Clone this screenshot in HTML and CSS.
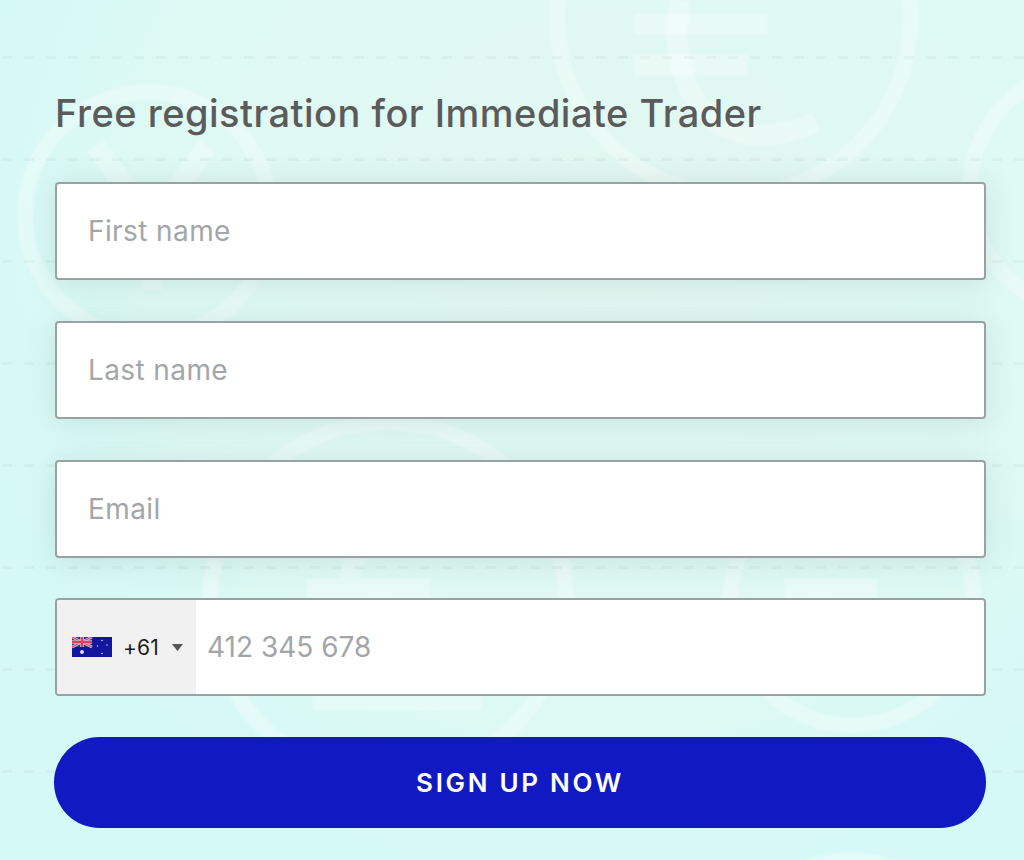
FILE: index.html
```html
<!DOCTYPE html>
<html lang="en">
<head>
<meta charset="utf-8">
<title>Free registration for Immediate Trader</title>
<link rel="stylesheet" href="styles.css">
</head>
<body>
<svg class="backdrop" viewBox="0 0 1024 860" aria-hidden="true">
  <defs>
    <pattern id="dashes" x="2" y="56" width="22" height="102" patternUnits="userSpaceOnUse">
      <rect width="10" height="3" fill="#9fb5b3" opacity=".13"/>
    </pattern>
    <radialGradient id="glow" cx="600" cy="250" r="660" gradientUnits="userSpaceOnUse">
      <stop offset="0" stop-color="#e2f8f1"/>
      <stop offset=".65" stop-color="#dff9f3"/>
      <stop offset="1" stop-color="#d4f9f7"/>
    </radialGradient>
  </defs>
  <rect width="1024" height="860" fill="url(#glow)"/>
  <g class="coins">
    <circle cx="734" cy="18" r="177"/>
    <path class="sign" d="M634 24H768M634 65H748"/>
    <path class="sign" d="M680 0C666 80 705 135 760 135C780 135 798 131 816 122"/>
    <circle cx="148" cy="215" r="123"/>
    <path class="sign" d="M95 146L152 222L208 146M152 222V290"/>
    <circle cx="388" cy="600" r="178"/>
    <path class="sign" d="M307 589H430M312 700H482M345 700C362 660 352 620 350 590C348 560 358 545 380 540"/>
    <circle cx="852" cy="603" r="122"/>
    <path class="sign" d="M784 589H877M830 560C835 545 825 540 825 560"/>
    <circle cx="1092" cy="190" r="122"/>
    <circle cx="850" cy="985" r="125"/>
  </g>
  <rect width="1024" height="860" fill="url(#dashes)"/>
</svg>

<form class="signup">
  <h1 class="title">Free registration for Immediate Trader</h1>
  <input class="field" type="text" placeholder="First name">
  <input class="field" type="text" placeholder="Last name">
  <input class="field" type="email" placeholder="Email">
  <div class="field phone">
    <div class="dial">
      <svg class="flag" viewBox="0 0 40 20" aria-hidden="true">
        <rect width="40" height="20" fill="#12169c"/>
        <rect width="20" height="10" fill="#2b2d8f"/>
        <path d="M0 0L20 10M20 0L0 10" stroke="#cfcfd8" stroke-width="2.6"/>
        <path d="M0 0L20 10M20 0L0 10" stroke="#dc4a62" stroke-width="1.2"/>
        <path d="M10 0V10M0 5H20" stroke="#e0d4d8" stroke-width="3.6"/>
        <path d="M10 0V10M0 5H20" stroke="#e0405c" stroke-width="2.4"/>
        <circle cx="10" cy="15" r="1.9" fill="#e8eaf4"/>
        <circle cx="30" cy="3.5" r=".8" fill="#d8daf0"/>
        <circle cx="30" cy="16.5" r=".8" fill="#d8daf0"/>
        <circle cx="25.5" cy="9" r=".7" fill="#d8daf0"/>
        <circle cx="35" cy="8" r=".7" fill="#d8daf0"/>
      </svg>
      <span class="code">+61</span>
      <svg class="caret" viewBox="0 0 11 7" aria-hidden="true"><path d="M0 0H11L5.500 7Z"/></svg>
    </div>
    <input class="tel" type="tel" placeholder="412 345 678">
  </div>
  <button class="submit" type="button">SIGN UP NOW</button>
</form>
</body>
</html>
```

FILE: styles.css
```css
* {
  box-sizing: border-box;
}

html,
body {
  margin: 0;
  height: 860px;
  overflow: hidden;
  background: #d8f9f6;
}

.backdrop {
  position: absolute;
  top: 0;
  left: 0;
  width: 1024px;
  height: 860px;
}

.coins {
  filter: blur(0.8px);
}

.coins circle,
.coins .sign {
  fill: none;
  stroke: #ffffff;
  stroke-opacity: 0.3;
}

.coins circle {
  stroke-width: 16;
}

.coins .sign {
  stroke-width: 21;
}

.signup {
  position: relative;
  display: flex;
  flex-direction: column;
  gap: 41px;
  width: 931px;
  margin-left: 55px;
  padding-top: 91px;
  font-family: Inter, "Noto Sans", sans-serif;
}

.title {
  margin: 0;
  height: 50px;
  font-size: 38px;
  line-height: 44px;
  font-weight: 500;
  letter-spacing: 0.5px;
  color: #5b5b5b;
  white-space: nowrap;
}

.field {
  display: block;
  width: 100%;
  height: 98px;
  padding: 0 31px;
  border: 2px solid #9aa1a3;
  border-radius: 4px;
  background: #ffffff;
  box-shadow: 0 3px 30px rgba(80, 120, 115, 0.17);
  font-family: Inter, "Noto Sans", sans-serif;
  font-size: 28px;
  letter-spacing: 0.4px;
  color: #333333;
  outline: none;
}

.field::placeholder,
.tel::placeholder {
  color: #a3a6a8;
  opacity: 1;
}

.phone {
  display: flex;
  align-items: stretch;
  padding: 0;
  overflow: hidden;
  margin-top: -1px;
  box-shadow: none;
}

.dial {
  display: flex;
  align-items: center;
  flex: 0 0 139px;
  padding-left: 15px;
  background: #f1f1f1;
}

.flag {
  width: 40px;
  height: 20px;
  margin-right: 11px;
}

.code {
  font-size: 21px;
  letter-spacing: 0.2px;
  color: #1c1c1c;
}

.caret {
  width: 11px;
  height: 7px;
  margin-left: 13px;
  fill: #555555;
}

.tel {
  flex: 1;
  min-width: 0;
  padding: 0 11px;
  border: 0;
  background: transparent;
  font-family: Inter, "Noto Sans", sans-serif;
  font-size: 28px;
  outline: none;
}

.submit {
  display: block;
  width: 932px;
  height: 91px;
  margin-left: -1px;
  border: 0;
  border-radius: 46px;
  background: #1119c3;
  color: #ffffff;
  font-family: Inter, "Noto Sans", sans-serif;
  font-size: 26px;
  font-weight: 600;
  letter-spacing: 2.7px;
}
```
